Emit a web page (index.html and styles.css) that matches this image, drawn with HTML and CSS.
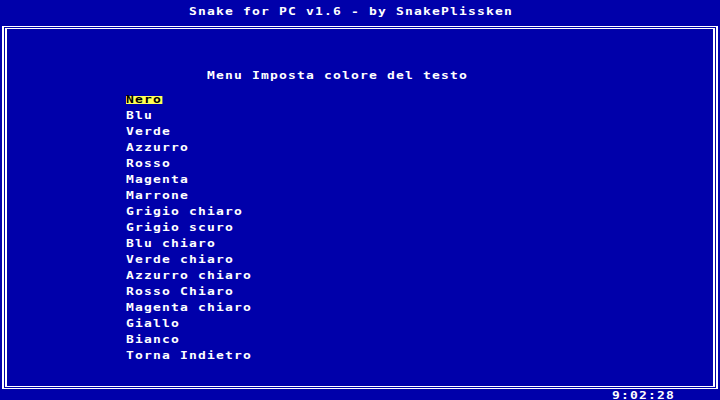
FILE: index.html
```html
<!DOCTYPE html>
<html lang="it">
<head>
<meta charset="utf-8">
<title>Snake for PC v1.6</title>
<link rel="stylesheet" href="styles.css">
</head>
<body>
<div class="screen">
  <div class="titlebar"><span class="t">Snake for PC v1.6 - by SnakePlissken</span></div>
  <div class="frame">
    <div class="inner">
      <div class="heading"><span class="t">Menu Imposta colore del testo</span></div>
      <ul class="menu">
        <li><span class="t sel">Nero</span></li>
        <li><span class="t">Blu</span></li>
        <li><span class="t">Verde</span></li>
        <li><span class="t">Azzurro</span></li>
        <li><span class="t">Rosso</span></li>
        <li><span class="t">Magenta</span></li>
        <li><span class="t">Marrone</span></li>
        <li><span class="t">Grigio chiaro</span></li>
        <li><span class="t">Grigio scuro</span></li>
        <li><span class="t">Blu chiaro</span></li>
        <li><span class="t">Verde chiaro</span></li>
        <li><span class="t">Azzurro chiaro</span></li>
        <li><span class="t">Rosso Chiaro</span></li>
        <li><span class="t">Magenta chiaro</span></li>
        <li><span class="t">Giallo</span></li>
        <li><span class="t">Bianco</span></li>
        <li><span class="t">Torna Indietro</span></li>
      </ul>
    </div>
  </div>
  <div class="status"><span class="t">9:02:28</span></div>
</div>
</body>
</html>
```
FILE: styles.css
```css
html, body {
  margin: 0;
  background: #0000aa;
}
body {
  width: 720px;
  height: 400px;
  overflow: hidden;
  color: #ffffff;
  font-family: "DejaVu Sans Mono", "Liberation Mono", monospace;
  font-weight: bold;
  font-size: 10px;
  line-height: 8px;
}
.screen {
  width: 720px;
  height: 400px;
}
.t {
  display: inline-block;
  height: 8px;
  white-space: pre;
  letter-spacing: 0.903px;
  transform: scaleX(1.3);
  transform-origin: 0 0;
  vertical-align: top;
}
.titlebar {
  height: 8px;
  padding: 8px 0 10px 189px;
}
.frame {
  margin: 0 2px;
  border: solid #ffffff;
  border-width: 1px 2px;
  padding: 1px;
}
.inner {
  border: solid #ffffff;
  border-width: 1px 2px;
  height: 314px;
  padding-top: 43px;
}
.heading {
  height: 8px;
  padding-left: 200px;
}
.menu {
  list-style: none;
  margin: 16px 0 0;
  padding: 0 0 0 119px;
  display: flex;
  flex-direction: column;
  gap: 8px;
}
.menu li {
  height: 8px;
}
.sel {
  background: #ffff55;
  color: #000000;
}
.status {
  margin-top: 3px;
  height: 8px;
  padding-left: 612px;
}
```
